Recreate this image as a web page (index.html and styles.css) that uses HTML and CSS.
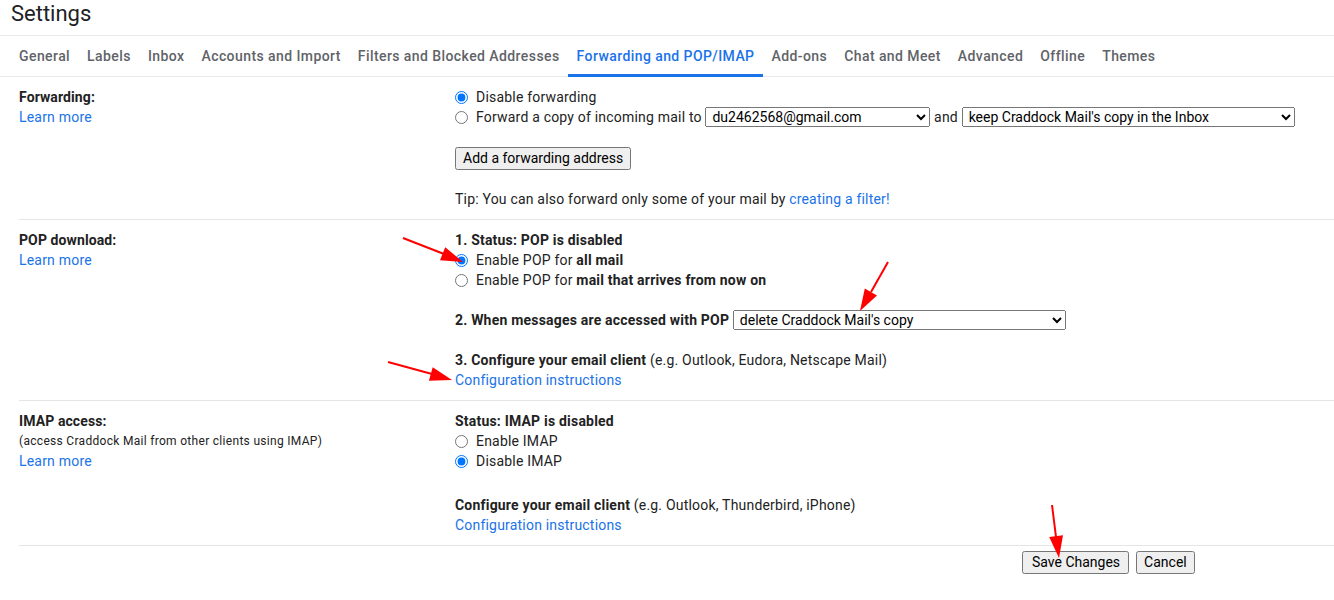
FILE: index.html
```html
<!DOCTYPE html>
<html>
<head>
<meta charset="utf-8">
<link rel="stylesheet" href="styles.css">
</head>
<body>
<div class="page">
  <header class="title-bar"><h1 class="title">Settings</h1></header>
  <nav class="tabs">
    <a class="tab">General</a>
    <a class="tab">Labels</a>
    <a class="tab">Inbox</a>
    <a class="tab">Accounts and Import</a>
    <a class="tab">Filters and Blocked Addresses</a>
    <a class="tab active">Forwarding and POP/IMAP</a>
    <a class="tab">Add-ons</a>
    <a class="tab">Chat and Meet</a>
    <a class="tab">Advanced</a>
    <a class="tab">Offline</a>
    <a class="tab">Themes</a>
  </nav>

  <section class="row first">
    <div class="left">
      <div class="label">Forwarding:</div>
      <a class="link">Learn more</a>
    </div>
    <div class="right">
      <label class="line"><input type="radio" name="fwd" checked>Disable forwarding</label>
      <label class="line"><input type="radio" name="fwd">Forward a copy of incoming mail to <select class="sel sel-email"><option>du2462568@gmail.com</option></select> and <select class="sel sel-keep"><option>keep Craddock Mail's copy in the Inbox</option></select></label>
      <div class="gap"></div>
      <div class="line"><button class="btn">Add a forwarding address</button></div>
      <div class="gap gap-btn"></div>
      <div class="line">Tip: You can also forward only some of your mail by <a class="link">creating a filter!</a></div>
    </div>
  </section>

  <section class="row">
    <div class="left">
      <div class="label">POP download:</div>
      <a class="link">Learn more</a>
    </div>
    <div class="right">
      <div class="line"><b>1. Status: POP is disabled</b></div>
      <label class="line"><input type="radio" name="pop" checked>Enable POP for <b>all mail</b></label>
      <label class="line"><input type="radio" name="pop">Enable POP for <b>mail that arrives from now on</b></label>
      <div class="gap"></div>
      <div class="line"><b>2. When messages are accessed with POP</b> <select class="sel sel-pop"><option>delete Craddock Mail's copy</option></select></div>
      <div class="gap"></div>
      <div class="line"><b>3. Configure your email client</b> (e.g. Outlook, Eudora, Netscape Mail)</div>
      <div class="line"><a class="link">Configuration instructions</a></div>
    </div>
  </section>

  <section class="row">
    <div class="left">
      <div class="label">IMAP access:</div>
      <div class="small">(access Craddock Mail from other clients using IMAP)</div>
      <a class="link">Learn more</a>
    </div>
    <div class="right">
      <div class="line"><b>Status: IMAP is disabled</b></div>
      <label class="line"><input type="radio" name="imap">Enable IMAP</label>
      <label class="line"><input type="radio" name="imap" checked>Disable IMAP</label>
      <div class="gap gap-lg"></div>
      <div class="line"><b>Configure your email client</b> (e.g. Outlook, Thunderbird, iPhone)</div>
      <div class="line"><a class="link">Configuration instructions</a></div>
    </div>
  </section>

  <footer class="actions">
    <button class="btn btn-save">Save Changes</button>
    <button class="btn">Cancel</button>
  </footer>
</div>

<svg class="arrows" width="1334" height="600" viewBox="0 0 1334 600">
  <g stroke="#f00" stroke-width="2" fill="none">
    <line x1="403" y1="238" x2="444" y2="254"/>
    <line x1="888" y1="262" x2="871" y2="292"/>
    <line x1="388" y1="362" x2="432" y2="374"/>
    <line x1="1052" y1="505" x2="1056" y2="537"/>
  </g>
  <g fill="#f00">
    <polygon points="463,262 440.0,260.3 445.2,247.3"/>
    <polygon points="860,311 864.8,288.4 877.0,295.4"/>
    <polygon points="452,380 428.9,380.8 432.7,367.3"/>
    <polygon points="1059,558 1049.2,537.1 1063.0,535.3"/>
  </g>
</svg>
</body>
</html>
```

FILE: styles.css
```css
html, body {
  margin: 0;
  padding: 0;
  background: #fff;
}
body {
  font-family: Roboto, "Liberation Sans", Arial, sans-serif;
  font-size: 14px;
  line-height: 20px;
  letter-spacing: 0.2px;
  color: #222;
  position: relative;
  width: 1334px;
  height: 600px;
  overflow: hidden;
}
.title-bar {
  height: 36px;
  border-bottom: 1px solid #e8eaed;
  box-sizing: border-box;
  padding-left: 11px;
}
.title {
  margin: 0;
  font-family: Roboto, "Open Sans", sans-serif;
  font-weight: 400;
  font-size: 22px;
  line-height: 28px;
  letter-spacing: 0;
  color: #202124;
}
.tabs {
  display: flex;
  height: 41px;
  box-sizing: border-box;
  padding-left: 10.5px;
  border-bottom: 1px solid #e8eaed;
}
.tab {
  display: flex;
  align-items: center;
  padding: 2px 8.5px 0;
  font-weight: 500;
  font-size: 14px;
  color: #5f6368;
  letter-spacing: 0.42px;
  border-bottom: 3px solid transparent;
  margin-bottom: -1px;
}
.tab.active {
  color: #1a73e8;
  border-bottom-color: #1a73e8;
}
.row {
  display: grid;
  grid-template-columns: 436px 1fr;
  margin-left: 19px;
  padding: 10px 0 10px;
  border-top: 1px solid #e5e5e5;
}
.row.first {
  border-top: none;
}
.left, .right {
  display: flex;
  flex-direction: column;
}
.label {
  font-weight: 700;
  letter-spacing: 0.1px;
}
.small {
  font-size: 12px;
  letter-spacing: 0.3px;
}
.link {
  color: #1a73e8;
  text-decoration: none;
  cursor: pointer;
}
.left .link {
  align-self: flex-start;
}
.line {
  display: block;
  height: 20px;
  white-space: nowrap;
}
.line b {
  font-weight: 700;
}
.gap {
  height: 20px;
}
.gap-btn {
  height: 22px;
}
.gap-lg {
  height: 24px;
}
input[type="radio"] {
  width: 13px;
  height: 13px;
  margin: 3px 8px 0 0;
  vertical-align: -2px;
}
.sel {
  font-family: Roboto, "Liberation Sans", sans-serif;
  font-size: 14px;
  height: 20px;
  padding: 0 2px;
  vertical-align: top;
  color: #000;
}
.sel-email { width: 225px; }
.sel-keep { width: 333px; }
.sel-pop { width: 333px; }
.btn {
  font-family: Roboto, "Liberation Sans", sans-serif;
  font-size: 14px;
  line-height: 17px;
  padding: 1px 6px;
  color: #000;
}
.btn-save {
  padding: 1px 7px 1px 8px;
}
.actions {
  display: flex;
  gap: 7px;
  margin-left: 19px;
  padding: 5px 0 0 1003px;
  border-top: 1px solid #e5e5e5;
}
.arrows {
  position: absolute;
  top: 0;
  left: 0;
  pointer-events: none;
}
```
